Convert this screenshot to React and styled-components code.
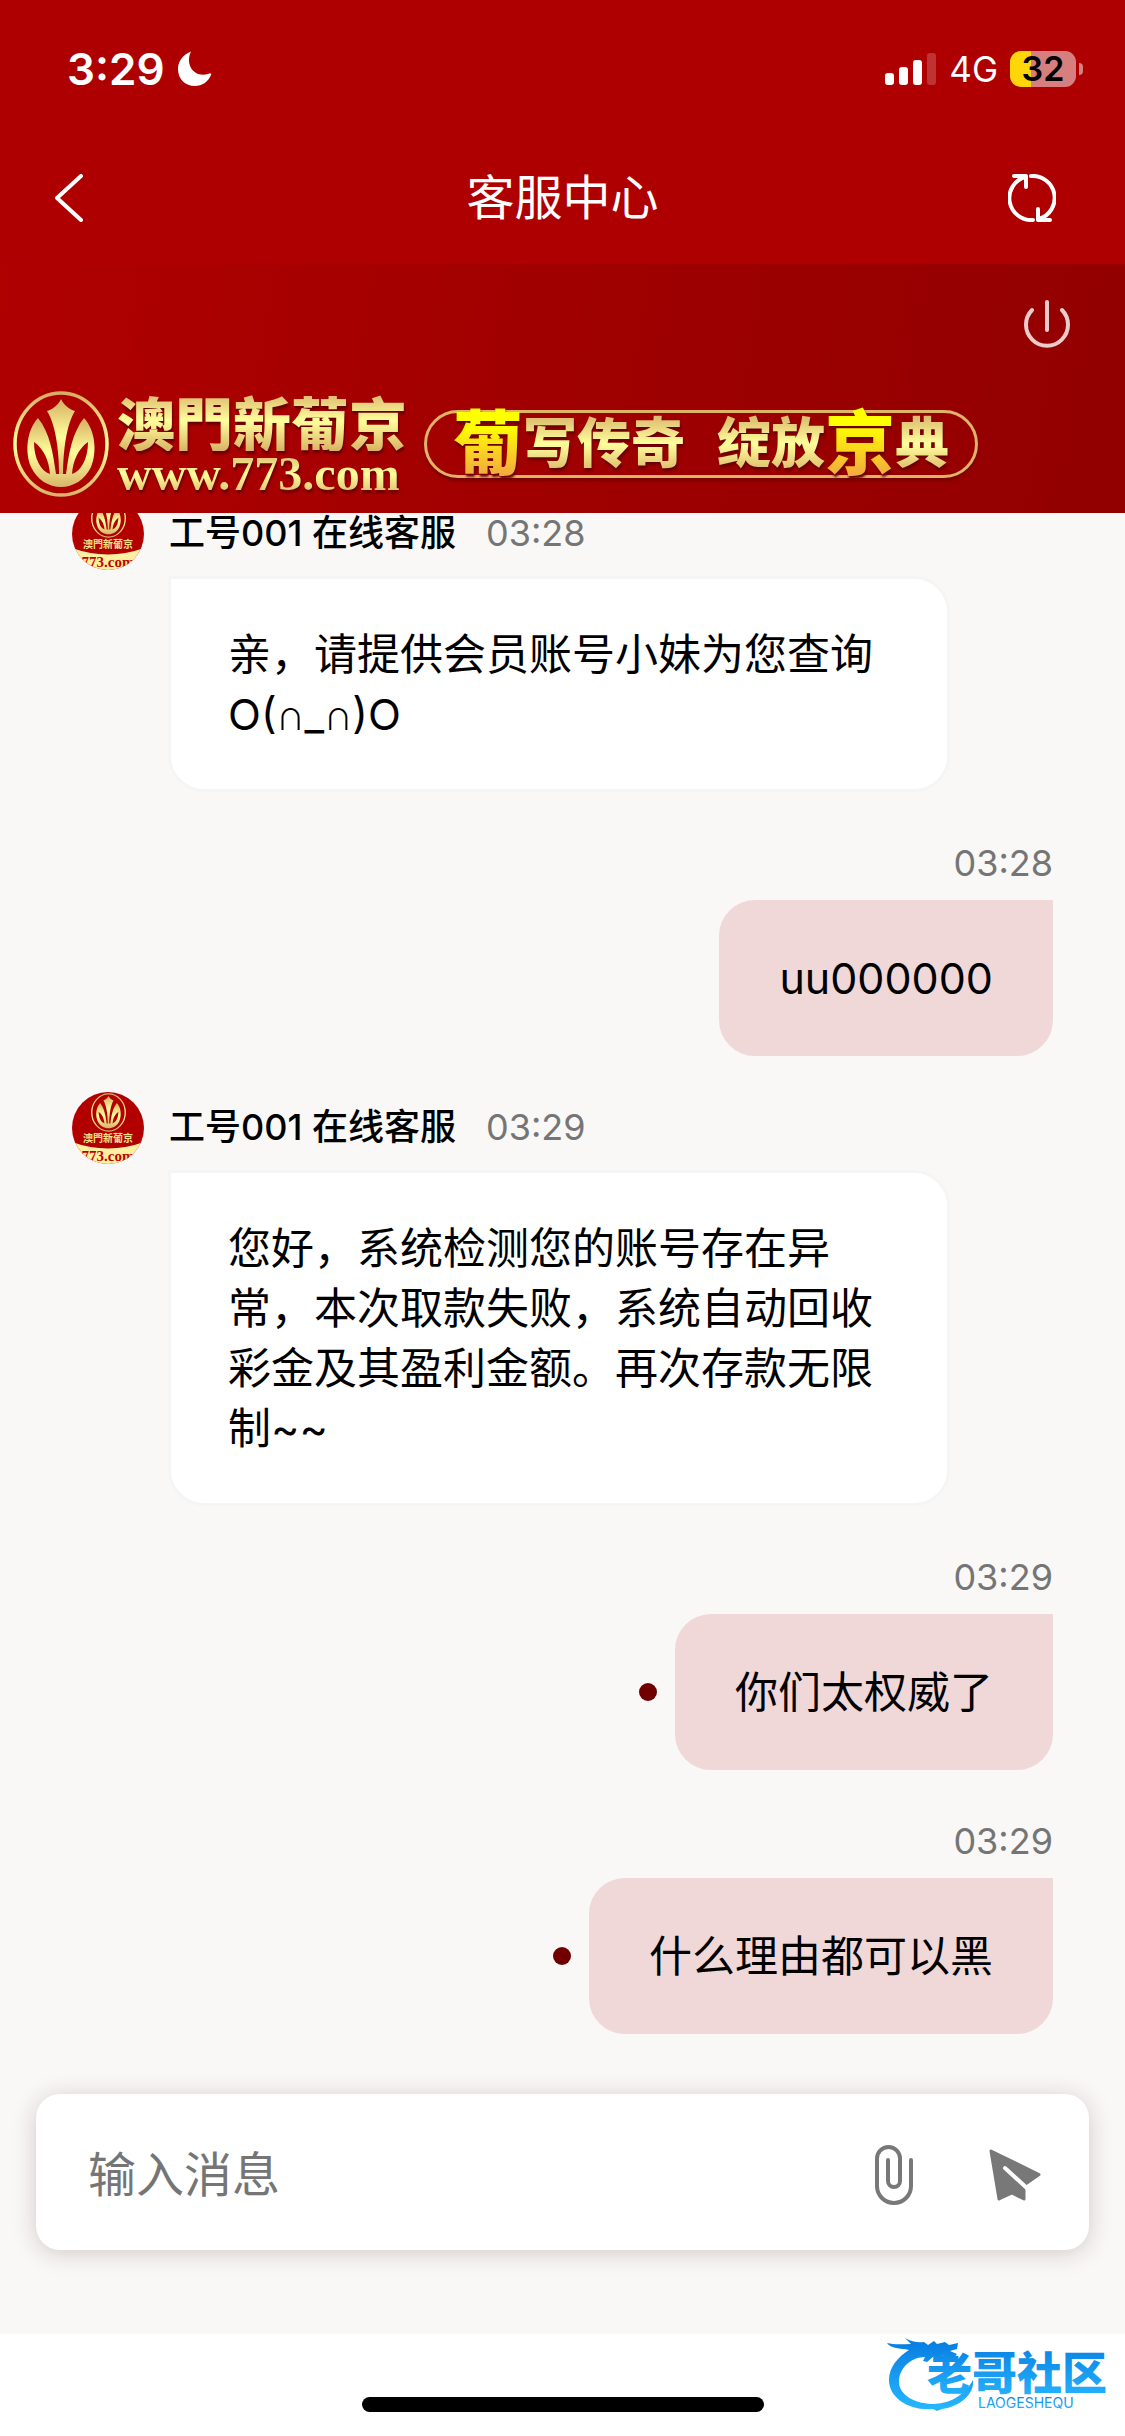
import React, { useState } from 'react';
import styled, { createGlobalStyle, css } from 'styled-components';

const sans = "Inter, 'Noto Sans CJK SC', sans-serif";
const gold = 'linear-gradient(#d9b36a, #ffff9c 50%, #d9b265)';

const GlobalStyle = createGlobalStyle`
  * {
    box-sizing: border-box;
  }

  body {
    margin: 0;
    font-family: ${sans};
    color: #000;
    background: #fff;
  }

  button {
    padding: 0;
    border: 0;
    background: none;
    cursor: pointer;
  }

  svg {
    display: block;
  }
`;

const Page = styled.div`
  display: flex;
  flex-direction: column;
  height: 100vh;
  background: #f9f8f7;
`;

/* ---------- top bars ---------- */

const Header = styled.header`
  flex-shrink: 0;
  color: #fff;
  background: #ae0000;
`;

const StatusBar = styled.div`
  display: flex;
  align-items: center;
  justify-content: space-between;
  height: 132px;
  padding: 6px 42px 0 67px;
`;

const StatusGroup = styled.div`
  display: flex;
  align-items: center;
  gap: 12px;
`;

const Clock = styled.span`
  font-size: 44px;
  font-weight: 600;
`;

const Network = styled.span`
  font-size: 35px;
`;

const Battery = styled.div`
  display: flex;
  align-items: center;
  gap: 3px;
`;

const BatteryBody = styled.div`
  width: 66px;
  height: 36px;
  border-radius: 11px;
  font-size: 34px;
  font-weight: 600;
  line-height: 36px;
  text-align: center;
  color: #000;
  background: linear-gradient(
    to right,
    #ffd60a ${(props) => props.$level}%,
    #d77f7f ${(props) => props.$level}%
  );
`;

const BatteryTip = styled.div`
  width: 4px;
  height: 12px;
  border-radius: 0 4px 4px 0;
  background: #d77f7f;
`;

const NavBar = styled.div`
  display: grid;
  grid-template-columns: 72px 1fr 72px;
  align-items: center;
  height: 132px;
  padding: 0 55px;
`;

const NavButton = styled.button`
  display: flex;
  align-items: center;
  justify-content: ${(props) => (props.$end ? 'flex-end' : 'flex-start')};
  height: 60px;
  padding-right: 14px;
  color: #fff;
`;

const Title = styled.h1`
  margin: 0;
  font-size: 48px;
  font-weight: 400;
  line-height: 60px;
  text-align: center;
`;

/* ---------- banner ---------- */

const Banner = styled.div`
  display: flex;
  flex-direction: column;
  flex-shrink: 0;
  justify-content: space-between;
  height: 249px;
  padding: 36px 13px 16px;
  background: linear-gradient(100deg, #b00000, #a00000 50%, #920000);
`;

const PowerButton = styled.button`
  align-self: flex-end;
  margin-right: 42px;
  color: #ebcccc;
`;

const BrandRow = styled.div`
  display: flex;
  align-items: center;
  gap: 8px;
`;

const goldText = css`
  color: transparent;
  background: ${gold};
  background-clip: text;
  filter: drop-shadow(1px 3px 1px #6a0000);
`;

const BrandName = styled.div`
  width: 299px;
`;

const BrandTitle = styled.div`
  font-family: 'Noto Sans CJK TC', sans-serif;
  font-size: 58px;
  font-weight: 900;
  line-height: 60px;
  ${goldText}
`;

const BrandUrl = styled.div`
  font-family: 'Liberation Serif', serif;
  font-size: 48px;
  font-weight: 700;
  line-height: 46px;
  ${goldText}
`;

const Slogan = styled.div`
  display: flex;
  align-items: center;
  height: 68px;
  padding: 0 26px;
  border: 3px solid #dfb468;
  border-radius: 34px;
  box-shadow: 0 3px 3px #7a0000;
  white-space: nowrap;
`;

const SloganText = styled.span`
  font-size: 54px;
  font-weight: 900;
  line-height: 60px;
  margin-right: ${(props) => (props.$gap ? '32px' : '0')};
  ${goldText}
`;

const SloganAccent = styled.span`
  font-size: 70px;
  font-weight: 900;
  line-height: 90px;
  color: transparent;
  background: linear-gradient(#ffff00 30%, #f2a93f 85%);
  background-clip: text;
  filter: drop-shadow(1px 3px 1px #6a0000);
`;

/* ---------- chat ---------- */

const Chat = styled.main`
  display: flex;
  flex: 1;
  flex-direction: column;
  justify-content: flex-end;
  gap: 36px;
  min-height: 0;
  padding: 0 72px 60px;
  overflow: hidden;
`;

const Message = styled.article`
  display: flex;
  flex-direction: column;
  flex-shrink: 0;
  align-items: ${(props) => (props.$mine ? 'flex-end' : 'flex-start')};
`;

const MessageHead = styled.div`
  display: flex;
  height: 72px;
  margin-bottom: ${(props) => (props.$mine ? '0' : '6px')};
  font-size: 36px;
  line-height: 70px;
`;

const AgentName = styled.span`
  margin: 0 30px 0 25px;
  font-weight: 500;
`;

const Time = styled.time`
  color: #757575;
`;

const BubbleRow = styled.div`
  display: flex;
  align-items: center;
  gap: 18px;
`;

const Bubble = styled.p`
  margin: 0;
  padding: 45px 57px;
  font-size: 43px;
  line-height: 60px;
  ${(props) =>
    props.$mine
      ? css`
          border: 3px solid #f0d8d8;
          border-radius: 36px 0 36px 36px;
          background: #f0d8d8;
        `
      : css`
          max-width: 782px;
          margin-left: 96px;
          border: 3px solid #f5f5f6;
          border-radius: 0 36px 36px 36px;
          background: #fff;
        `}
`;

const Eye = styled.span`
  font-size: 28px;
  line-height: 28px;
`;

const UnreadDot = styled.span`
  width: 18px;
  height: 18px;
  border-radius: 50%;
  background: #700000;
`;

/* ---------- input ---------- */

const Composer = styled.form`
  display: flex;
  flex-shrink: 0;
  align-items: center;
  height: 156px;
  margin: 0 36px 84px;
  padding: 6px 48px 0 52px;
  border-radius: 24px;
  background: #fff;
  box-shadow: 0 3px 24px rgba(60, 20, 20, 0.2);
`;

const MessageInput = styled.input`
  flex: 1;
  min-width: 0;
  padding: 0;
  border: 0;
  outline: 0;
  font-family: ${sans};
  font-size: 48px;
  line-height: 60px;
  background: none;

  &::placeholder {
    color: #757575;
    opacity: 1;
  }
`;

const ToolButton = styled.button`
  margin-left: 76px;
  color: #787878;
`;

const HomeArea = styled.footer`
  position: relative;
  display: flex;
  flex-shrink: 0;
  align-items: flex-end;
  justify-content: center;
  height: 102px;
  padding-bottom: 24px;
  background: #fff;
`;

const HomeIndicator = styled.div`
  width: 402px;
  height: 15px;
  border-radius: 8px;
  background: #000;
`;

const Watermark = styled.div`
  position: absolute;
  right: 16px;
  bottom: 24px;
`;

/* ---------- drawings ---------- */

const Lotus = ({ id, ...rest }) => (
  <svg viewBox="0 0 96 106" aria-hidden="true" {...rest}>
    <defs>
      <linearGradient id={id} x1="0" y1="0" x2="0" y2="1">
        <stop offset="0" stopColor="#d6ae63" />
        <stop offset="0.5" stopColor="#ffff9c" />
        <stop offset="1" stopColor="#d9b46a" />
      </linearGradient>
    </defs>
    <ellipse
      cx="48"
      cy="53"
      rx="46"
      ry="51"
      fill="none"
      stroke={`url(#${id})`}
      strokeWidth="3.5"
    />
    <g fill={`url(#${id})`}>
      <path d="M48 8C45 14 40 18 34 20C42 32 46 58 46 84H50C50 58 54 32 62 20C56 18 51 14 48 8Z" />
      <path d="M25 27C13 40 12 62 18 76C24 89 36 96 48 96C60 96 72 89 78 76C84 62 83 40 71 27C59 42 56 62 53 83H59C60 70 65 58 75 51C75 68 68 80 59 83H37C28 80 21 68 21 51C31 58 36 70 37 83H43C40 62 37 42 25 27Z" />
    </g>
  </svg>
);

const Avatar = ({ id }) => (
  <svg width="72" height="72" viewBox="0 0 72 72" aria-hidden="true">
    <defs>
      <clipPath id={`${id}-clip`}>
        <circle cx="36" cy="36" r="36" />
      </clipPath>
    </defs>
    <g clipPath={`url(#${id}-clip)`}>
      <rect width="72" height="72" fill="#b20000" />
      <path d="M0 50Q36 63 72 50V72H0Z" fill="#fdf0a0" />
      <Lotus id={`${id}-lotus`} x="19" y="1" width="35" height="39" />
      <text
        x="36"
        y="50"
        fontSize="10"
        fontWeight="700"
        fontFamily="'Noto Sans CJK TC', sans-serif"
        textAnchor="middle"
        fill="#f6e08a"
      >
        澳門新葡京
      </text>
      <text
        x="36"
        y="69"
        fontSize="15"
        fontWeight="700"
        fontFamily="'Liberation Serif', serif"
        textAnchor="middle"
        fill="#c00000"
      >
        773.com
      </text>
    </g>
  </svg>
);

const MoonIcon = () => (
  <svg width="35" height="36" viewBox="0 0 35 36" aria-hidden="true">
    <path
      d="M13 1C14 0 14 1 13 3C9 14 17 27 31 23C34 22 35 23 34 24C31 31 25 35 18 35C8 35 1 28 1 18C1 10 6 4 13 1Z"
      fill="#fff"
    />
  </svg>
);

const SignalIcon = () => (
  <svg width="52" height="34" viewBox="0 0 52 34" aria-hidden="true">
    <g fill="#fff">
      <rect x="0" y="21" width="9" height="12" rx="3" />
      <rect x="14" y="15" width="9" height="18" rx="3" />
      <rect x="28" y="8" width="9" height="25" rx="3" />
      <rect x="42" y="1" width="9" height="32" rx="3" opacity="0.2" />
    </g>
  </svg>
);

const LineIcon = ({ width, height, d, strokeWidth = 4 }) => (
  <svg
    width={width}
    height={height}
    viewBox={`0 0 ${width} ${height}`}
    fill="none"
    stroke="currentColor"
    strokeWidth={strokeWidth}
    strokeLinecap="round"
    strokeLinejoin="round"
    aria-hidden="true"
  >
    <path d={d} />
  </svg>
);

const SendIcon = () => (
  <svg width="52" height="52" viewBox="0 0 52 52" aria-hidden="true">
    <path
      d="M2 2L50 25.5L35 36V50L23 44L10 50Z"
      fill="currentColor"
      stroke="currentColor"
      strokeWidth="3"
      strokeLinejoin="round"
    />
    <path
      d="M16 19L40 41"
      stroke="#fff"
      strokeWidth="4"
      strokeLinecap="round"
    />
  </svg>
);

const CommunityLogo = () => (
  <svg width="222" height="78" viewBox="0 0 222 78" role="img">
    <defs>
      <linearGradient id="sea" x1="0" y1="0" x2="0" y2="1">
        <stop offset="0" stopColor="#067be0" />
        <stop offset="1" stopColor="#27b8ff" />
      </linearGradient>
    </defs>
    <g fill="url(#sea)">
      <path d="M0 9C8 11 15 10 24 10L18 4C25 8 31 9 37 8L41 11L47 7L50 10L58 8L62 11L71 9L70 15L63 17L70 20L67 24L56 21L53 25L47 22L40 28L36 27L38 23C24 23 12 34 12 48C12 61 28 70 47 70C66 69 79 59 86 46C88 60 72 73 55 75L50 77L46 75C22 77 2 64 2 46C2 33 11 23 22 16C13 14 4 15 0 9Z" />
      <text
        x="40"
        y="56"
        fontFamily="'Noto Sans CJK SC', sans-serif"
        fontSize="45"
        fontWeight="900"
      >
        老哥社区
      </text>
      <text x="91" y="74" fontFamily="Inter, sans-serif" fontSize="14">
        LAOGESHEQU
      </text>
    </g>
  </svg>
);

const messages = [
  {
    id: 1,
    time: '03:28',
    name: '工号001 在线客服',
    text: (
      <>
        亲，请提供会员账号小妹为您查询O(<Eye>∩</Eye>_<Eye>∩</Eye>)O
      </>
    ),
  },
  { id: 2, time: '03:28', mine: true, text: 'uu000000' },
  {
    id: 3,
    time: '03:29',
    name: '工号001 在线客服',
    text: '您好，系统检测您的账号存在异常，本次取款失败，系统自动回收彩金及其盈利金额。再次存款无限制~~',
  },
  { id: 4, time: '03:29', mine: true, unread: true, text: '你们太权威了' },
  { id: 5, time: '03:29', mine: true, unread: true, text: '什么理由都可以黑' },
];

export default function App() {
  const [draft, setDraft] = useState('');

  return (
    <Page>
      <GlobalStyle />

      <Header>
        <StatusBar>
          <StatusGroup>
            <Clock>3:29</Clock>
            <MoonIcon />
          </StatusGroup>
          <StatusGroup>
            <SignalIcon />
            <Network>4G</Network>
            <Battery>
              <BatteryBody $level={32}>32</BatteryBody>
              <BatteryTip />
            </Battery>
          </StatusGroup>
        </StatusBar>

        <NavBar>
          <NavButton type="button" aria-label="返回">
            <LineIcon width={28} height={48} d="M26 2L2 24L26 46" />
          </NavButton>
          <Title>客服中心</Title>
          <NavButton type="button" aria-label="刷新" $end>
            <LineIcon
              width={48}
              height={48}
              d="M6 2H18V13M17 3A22 22 0 0 0 25 46M23 2A22 22 0 0 1 31 45M42 46H30V35"
            />
          </NavButton>
        </NavBar>
      </Header>

      <Banner>
        <PowerButton type="button" aria-label="结束对话">
          <LineIcon
            width={46}
            height={48}
            d="M8 10A21 21 0 1 0 38 10M23 2V30"
          />
        </PowerButton>
        <BrandRow>
          <Lotus id="brand-lotus" width="96" height="106" />
          <BrandName>
            <BrandTitle>澳門新葡京</BrandTitle>
            <BrandUrl>www.773.com</BrandUrl>
          </BrandName>
          <Slogan>
            <SloganAccent>葡</SloganAccent>
            <SloganText $gap>写传奇</SloganText>
            <SloganText>绽放</SloganText>
            <SloganAccent>京</SloganAccent>
            <SloganText>典</SloganText>
          </Slogan>
        </BrandRow>
      </Banner>

      <Chat>
        {messages.map((message) => (
          <Message key={message.id} $mine={message.mine}>
            <MessageHead $mine={message.mine}>
              {!message.mine && <Avatar id={`avatar-${message.id}`} />}
              {!message.mine && <AgentName>{message.name}</AgentName>}
              <Time>{message.time}</Time>
            </MessageHead>
            <BubbleRow>
              {message.unread && <UnreadDot />}
              <Bubble $mine={message.mine}>{message.text}</Bubble>
            </BubbleRow>
          </Message>
        ))}
      </Chat>

      <Composer onSubmit={(event) => event.preventDefault()}>
        <MessageInput
          aria-label="输入消息"
          placeholder="输入消息"
          value={draft}
          onChange={(event) => setDraft(event.target.value)}
        />
        <ToolButton type="button" aria-label="添加附件">
          <LineIcon
            width={38}
            height={60}
            d="M36 15V41A17 17 0 0 1 2 41V13.5A11.5 11.5 0 0 1 25 13.5V36A6 6 0 0 1 13 36V15"
          />
        </ToolButton>
        <ToolButton type="submit" aria-label="发送">
          <SendIcon />
        </ToolButton>
      </Composer>

      <HomeArea>
        <HomeIndicator />
        <Watermark>
          <CommunityLogo />
        </Watermark>
      </HomeArea>
    </Page>
  );
}
